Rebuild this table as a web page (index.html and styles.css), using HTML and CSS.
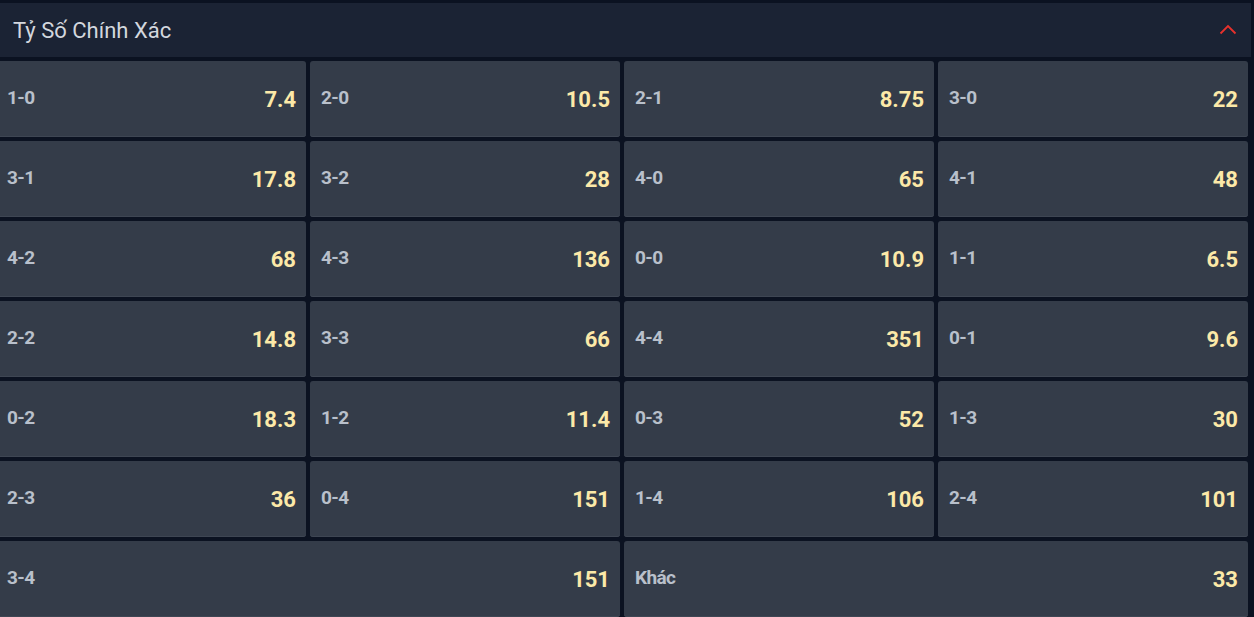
FILE: index.html
```html
<!DOCTYPE html>
<html lang="vi">
<head>
<meta charset="utf-8">
<link rel="stylesheet" href="styles.css">
</head>
<body>
<div class="panel">
  <div class="header">
    <span class="title">Tỷ Số Chính Xác</span>
    <svg class="chev" width="18" height="12" viewBox="0 0 18 12"><path d="M1.5 10.5 L9 3 L16.5 10.5" fill="none" stroke="#e8312c" stroke-width="1.8"/></svg>
  </div>
  <div class="grid">
    <div class="cell"><span class="lbl">1-0</span><span class="odd">7.4</span></div>
    <div class="cell"><span class="lbl">2-0</span><span class="odd">10.5</span></div>
    <div class="cell"><span class="lbl">2-1</span><span class="odd">8.75</span></div>
    <div class="cell"><span class="lbl">3-0</span><span class="odd">22</span></div>
    <div class="cell"><span class="lbl">3-1</span><span class="odd">17.8</span></div>
    <div class="cell"><span class="lbl">3-2</span><span class="odd">28</span></div>
    <div class="cell"><span class="lbl">4-0</span><span class="odd">65</span></div>
    <div class="cell"><span class="lbl">4-1</span><span class="odd">48</span></div>
    <div class="cell"><span class="lbl">4-2</span><span class="odd">68</span></div>
    <div class="cell"><span class="lbl">4-3</span><span class="odd">136</span></div>
    <div class="cell"><span class="lbl">0-0</span><span class="odd">10.9</span></div>
    <div class="cell"><span class="lbl">1-1</span><span class="odd">6.5</span></div>
    <div class="cell"><span class="lbl">2-2</span><span class="odd">14.8</span></div>
    <div class="cell"><span class="lbl">3-3</span><span class="odd">66</span></div>
    <div class="cell"><span class="lbl">4-4</span><span class="odd">351</span></div>
    <div class="cell"><span class="lbl">0-1</span><span class="odd">9.6</span></div>
    <div class="cell"><span class="lbl">0-2</span><span class="odd">18.3</span></div>
    <div class="cell"><span class="lbl">1-2</span><span class="odd">11.4</span></div>
    <div class="cell"><span class="lbl">0-3</span><span class="odd">52</span></div>
    <div class="cell"><span class="lbl">1-3</span><span class="odd">30</span></div>
    <div class="cell"><span class="lbl">2-3</span><span class="odd">36</span></div>
    <div class="cell"><span class="lbl">0-4</span><span class="odd">151</span></div>
    <div class="cell"><span class="lbl">1-4</span><span class="odd">106</span></div>
    <div class="cell"><span class="lbl">2-4</span><span class="odd">101</span></div>
    <div class="cell wide"><span class="lbl">3-4</span><span class="odd">151</span></div>
    <div class="cell wide"><span class="lbl">Khác</span><span class="odd">33</span></div>
  </div>
</div>
</body>
</html>
```
FILE: styles.css
```css
html, body {
  margin: 0;
  padding: 0;
  background: #0b1221;
  overflow: hidden;
}
body {
  padding-top: 3px;
  font-family: Roboto, "Noto Sans", "Liberation Sans", sans-serif;
}
.panel {
  width: 1251px;
}
.header {
  height: 54px;
  background: #1b2334;
  display: flex;
  align-items: center;
  justify-content: space-between;
  padding: 0 14px 0 13px;
  box-sizing: border-box;
  margin-bottom: 4px;
}
.title {
  color: #d3d7de;
  font-size: 22px;
  font-weight: 400;
}
.chev {
  display: block;
  margin-top: -2px;
}
.grid {
  margin-left: -4px;
  width: 1252px;
  display: grid;
  grid-template-columns: repeat(4, 310px);
  grid-auto-rows: 76px;
  gap: 4px;
}
.cell {
  background: #343c49;
  border-radius: 3px;
  box-shadow: inset 0 -1px 0 #3e4653;
  display: flex;
  align-items: center;
  justify-content: space-between;
  padding: 0 10px 0 11px;
}
.wide {
  grid-column: span 2;
}
.lbl {
  color: #b9c0cb;
  font-size: 19px;
  font-weight: 700;
  letter-spacing: -0.6px;
  margin-top: -3px;
}
.odd {
  color: #fce9a8;
  font-size: 22px;
  font-weight: 700;
  margin-top: 1px;
}
```
